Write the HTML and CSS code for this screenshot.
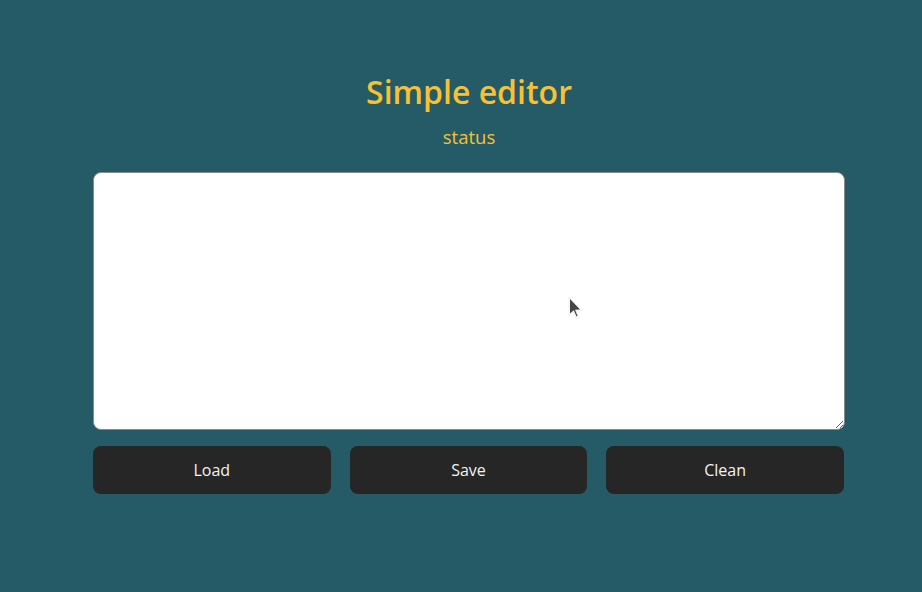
FILE: index.html
```html
<!DOCTYPE html>
<html>
<head>
<meta charset="utf-8">
<link rel="stylesheet" href="styles.css">
</head>
<body>
<main class="app">
  <h1 class="title">Simple editor</h1>
  <p class="status">status</p>
  <textarea class="editor"></textarea>
  <div class="actions">
    <button class="btn">Load</button>
    <button class="btn">Save</button>
    <button class="btn">Clean</button>
  </div>
</main>
<svg class="cursor" width="16" height="24" viewBox="0 0 16 24">
  <path d="M1 1 L1 20 L5.5 16 L8.5 22.5 L11 21.5 L8.3 15.2 L14 14.5 Z" fill="#ffffff" stroke="#e6e6e6" stroke-width="0.6"/>
  <path d="M2 3 L2 17.6 L5.8 14.3 L8.5 20.6 L9.6 20.1 L7 13.8 L12 13.4 Z" fill="#454545"/>
</svg>
</body>
</html>
```
FILE: styles.css
```css
html, body {
  margin: 0;
  padding: 0;
  background: #255b66;
  height: 100%;
}
body {
  font-family: "Open Sans", sans-serif;
  position: relative;
}
.app {
  width: 752px;
  margin-left: 93px;
  padding-top: 68px;
  display: flex;
  flex-direction: column;
  align-items: stretch;
}
.title {
  margin: 0;
  text-align: center;
  color: #f8c134;
  font-size: 32px;
  font-weight: 600;
  line-height: 48px;
}
.status {
  margin: 8px 0 0;
  text-align: center;
  color: #f8c134;
  font-size: 18.5px;
  line-height: 26px;
}
.editor {
  margin-top: 22px;
  box-sizing: border-box;
  width: 752px;
  height: 258px;
  border: 1px solid #8a8a8a;
  border-radius: 8px;
  background: #fff;
  padding: 8px;
  font-family: "Open Sans", sans-serif;
  font-size: 16px;
}
.actions {
  margin-top: 16px;
  width: 751px;
  display: grid;
  grid-template-columns: 1fr 1fr 1fr;
  gap: 19px;
}
.btn {
  height: 48px;
  border: none;
  border-radius: 8px;
  background: #262626;
  color: #f2f2f2;
  font-family: "Open Sans", sans-serif;
  font-size: 16px;
}
.cursor {
  position: absolute;
  left: 568px;
  top: 296px;
}
```
